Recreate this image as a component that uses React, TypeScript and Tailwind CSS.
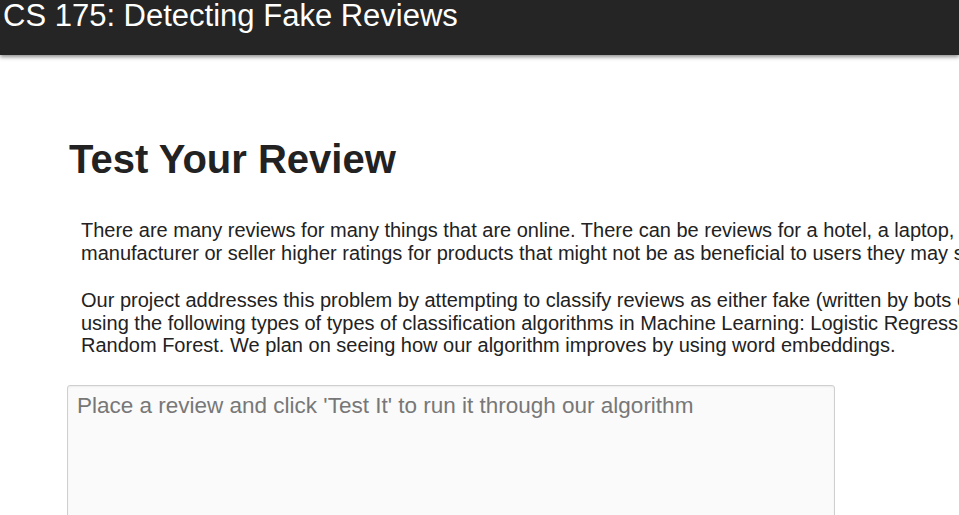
import React from "react";

const font = { fontFamily: '"Liberation Sans", Arial, sans-serif' };

export default function App() {
  return (
    <div
      className="w-[959px] h-[515px] overflow-hidden bg-white text-[#222]"
      style={font}
    >
      <header className="h-[55px] bg-[#252525] shadow-[0_2px_4px_rgba(0,0,0,0.45)] relative z-10">
        <h1 className="pl-[3px] text-[31px] leading-[32px] text-white font-normal whitespace-nowrap">
          CS 175: Detecting Fake Reviews
        </h1>
      </header>
      <main className="w-[1300px] pl-[67px] pt-[82px]">
        <h2 className="pl-[2px] text-[40px] leading-[44px] font-bold text-[#222]">
          Test Your Review
        </h2>
        <div className="pl-[14px] pt-[38px] text-[20px] leading-[22.5px] text-[#222]">
          <p className="whitespace-nowrap">
            <span className="block">
              There are many reviews for many things that are online. There can be reviews for a hotel, a laptop, or even a restaurant. Some of these
            </span>
            <span className="block">
              manufacturer or seller higher ratings for products that might not be as beneficial to users they may seem.
            </span>
          </p>
          <p className="whitespace-nowrap mt-[25px]">
            <span className="block">
              Our project addresses this problem by attempting to classify reviews as either fake (written by bots or paid reviewers) or real
            </span>
            <span className="block">
              using the following types of types of classification algorithms in Machine Learning: Logistic Regression, Naive Bayes, and
            </span>
            <span className="block">
              Random Forest. We plan on seeing how our algorithm improves by using word embeddings.
            </span>
          </p>
        </div>
        <textarea
          className="mt-[28px] block w-[768px] h-[180px] rounded-[3px] border border-[#cfcfcf] bg-[#fafafa] px-[9px] py-[6px] text-[22.5px] leading-[28px] text-[#555] placeholder:text-[#777] shadow-[inset_0_1px_2px_rgba(0,0,0,0.06)] resize-none outline-none"
          style={font}
          placeholder="Place a review and click 'Test It' to run it through our algorithm"
        />
      </main>
    </div>
  );
}
